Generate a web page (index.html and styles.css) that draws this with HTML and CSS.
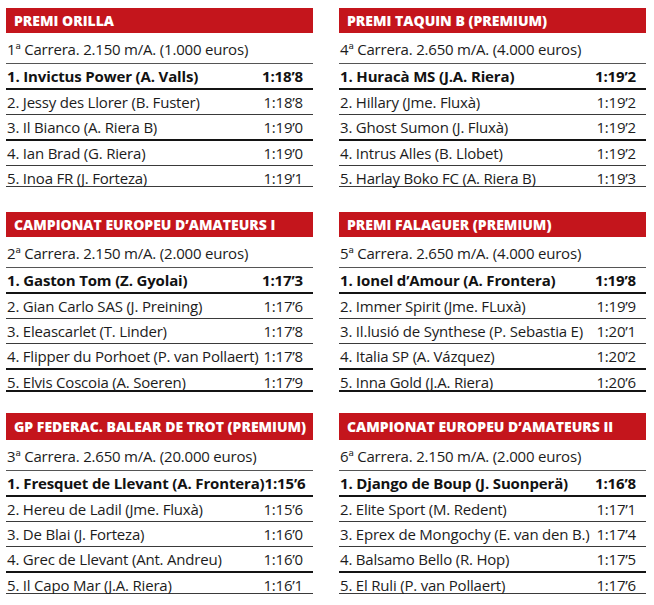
FILE: index.html
```html
<!DOCTYPE html>
<html lang="ca">
<head>
<meta charset="utf-8">
<title>Resultats</title>
<link rel="stylesheet" href="styles.css">
</head>
<body>
<main class="page">
  <section class="race r1">
    <h2 class="head">PREMI ORILLA</h2>
    <div class="sub">1ª Carrera. 2.150 m/A. (1.000 euros)</div>
    <div class="row win k"><span>1. Invictus Power (A. Valls)</span><span>1:18’8</span></div>
    <div class="row"><span>2. Jessy des Llorer (B. Fuster)</span><span>1:18’8</span></div>
    <div class="row k"><span>3. Il Bianco (A. Riera B)</span><span>1:19’0</span></div>
    <div class="row"><span>4. Ian Brad (G. Riera)</span><span>1:19’0</span></div>
    <div class="row last"><span>5. Inoa FR (J. Forteza)</span><span>1:19’1</span></div>
  </section>
  <section class="race r1">
    <h2 class="head">PREMI TAQUIN B (PREMIUM)</h2>
    <div class="sub">4ª Carrera. 2.650 m/A. (4.000 euros)</div>
    <div class="row win k"><span>1. Huracà MS (J.A. Riera)</span><span>1:19’2</span></div>
    <div class="row"><span>2. Hillary (Jme. Fluxà)</span><span>1:19’2</span></div>
    <div class="row k"><span>3. Ghost Sumon (J. Fluxà)</span><span>1:19’2</span></div>
    <div class="row"><span>4. Intrus Alles (B. Llobet)</span><span>1:19’2</span></div>
    <div class="row last"><span>5. Harlay Boko FC (A. Riera B)</span><span>1:19’3</span></div>
  </section>

  <section class="race r2">
    <h2 class="head">CAMPIONAT EUROPEU D’AMATEURS I</h2>
    <div class="sub">2ª Carrera. 2.150 m/A. (2.000 euros)</div>
    <div class="row win k"><span>1. Gaston Tom (Z. Gyolai)</span><span>1:17’3</span></div>
    <div class="row"><span>2. Gian Carlo SAS (J. Preining)</span><span>1:17’6</span></div>
    <div class="row"><span>3. Eleascarlet (T. Linder)</span><span>1:17’8</span></div>
    <div class="row k"><span>4. Flipper du Porhoet (P. van Pollaert)</span><span>1:17’8</span></div>
    <div class="row last k"><span>5. Elvis Coscoia (A. Soeren)</span><span>1:17’9</span></div>
  </section>
  <section class="race r2">
    <h2 class="head">PREMI FALAGUER (PREMIUM)</h2>
    <div class="sub">5ª Carrera. 2.650 m/A. (4.000 euros)</div>
    <div class="row win k"><span>1. Ionel d’Amour (A. Frontera)</span><span>1:19’8</span></div>
    <div class="row"><span>2. Immer Spirit (Jme. FLuxà)</span><span>1:19’9</span></div>
    <div class="row"><span>3. Il.lusió de Synthese (P. Sebastia E)</span><span>1:20’1</span></div>
    <div class="row k"><span>4. Italia SP (A. Vázquez)</span><span>1:20’2</span></div>
    <div class="row last k"><span>5. Inna Gold (J.A. Riera)</span><span>1:20’6</span></div>
  </section>

  <section class="race r3">
    <h2 class="head">GP FEDERAC. BALEAR DE TROT (PREMIUM)</h2>
    <div class="sub">3ª Carrera. 2.650 m/A. (20.000 euros)</div>
    <div class="row win k"><span>1. Fresquet de Llevant (A. Frontera)</span><span>1:15’6</span></div>
    <div class="row"><span>2. Hereu de Ladil (Jme. Fluxà)</span><span>1:15’6</span></div>
    <div class="row"><span>3. De Blai (J. Forteza)</span><span>1:16’0</span></div>
    <div class="row k"><span>4. Grec de Llevant (Ant. Andreu)</span><span>1:16’0</span></div>
    <div class="row last"><span>5. Il Capo Mar (J.A. Riera)</span><span>1:16’1</span></div>
  </section>
  <section class="race r3">
    <h2 class="head">CAMPIONAT EUROPEU D’AMATEURS II</h2>
    <div class="sub">6ª Carrera. 2.150 m/A. (2.000 euros)</div>
    <div class="row win k"><span>1. Django de Boup (J. Suonperä)</span><span>1:16’8</span></div>
    <div class="row"><span>2. Elite Sport (M. Redent)</span><span>1:17’1</span></div>
    <div class="row"><span>3. Eprex de Mongochy (E. van den B.)</span><span>1:17’4</span></div>
    <div class="row k"><span>4. Balsamo Bello (R. Hop)</span><span>1:17’5</span></div>
    <div class="row last"><span>5. El Ruli (P. van Pollaert)</span><span>1:17’6</span></div>
  </section>
</main>
</body>
</html>
```
FILE: styles.css
```css
html, body {
  margin: 0;
  padding: 0;
  background: #ffffff;
}

.page {
  display: grid;
  grid-template-columns: 307px 307px;
  column-gap: 26px;
  padding: 8px 0 0 6px;
  font-family: "Open Sans", "Noto Sans", sans-serif;
  color: #1c1c1c;
}

.race {
  display: flex;
  flex-direction: column;
}

.race.r2 { margin-top: 25px; }
.race.r3 { margin-top: 21px; }

.head {
  margin: 0;
  height: 25px;
  line-height: 26px;
  padding-left: 8px;
  background: #c4151c;
  color: #ffffff;
  font-size: 14px;
  font-weight: 800;
  font-stretch: 100%;
  letter-spacing: 0;
  white-space: nowrap;
  overflow: hidden;
}

.race.r3 .head {
  height: 27px;
  line-height: 28px;
}

.sub {
  height: 28px;
  padding: 2px 0 0 1px;
  line-height: 28px;
  font-size: 15px;
  font-stretch: 88%;
  letter-spacing: -0.2px;
  border-bottom: 1px solid #555;
  white-space: nowrap;
}

.row {
  display: flex;
  justify-content: space-between;
  height: 24px;
  line-height: 24px;
  padding: 0 10px 0 1px;
  font-size: 15px;
  font-stretch: 88%;
  letter-spacing: -0.2px;
  border-bottom: 1px solid #3a3a3a;
  white-space: nowrap;
}

.row.k {
  border-bottom: 2px solid #141414;
}

.row.last {
  height: 20px;
}

.row.win {
  font-weight: 700;
  font-stretch: 100%;
  letter-spacing: -0.15px;
  color: #121212;
}
```
